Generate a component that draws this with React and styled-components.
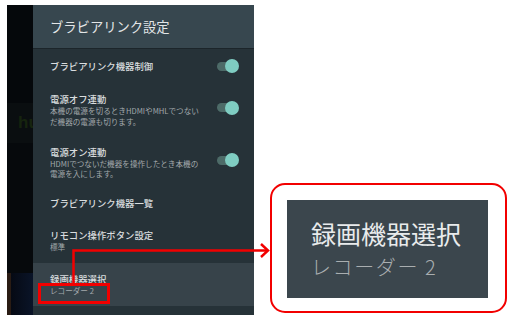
import React from 'react';
import styled, { createGlobalStyle } from 'styled-components';

const Global = createGlobalStyle`
  html, body { margin: 0; padding: 0; background: #fff; }
  body { font-family: "Noto Sans CJK JP", "Noto Sans", sans-serif; }
`;

const Page = styled.div`
  position: relative;
  width: 517px;
  height: 331px;
  display: flex;
  align-items: flex-start;
  padding: 5px 0 0 7px;
  box-sizing: border-box;
  overflow: hidden;
`;

const Screen = styled.div`
  display: flex;
  width: 247px;
  height: 310px;
`;

const Backdrop = styled.div`
  width: 26px;
  display: flex;
  flex-direction: column;
  background: #05080b;
  overflow: hidden;
`;

const Band = styled.div`
  height: ${p => p.h}px;
  background: ${p => p.bg};
  color: #16240e;
  font-family: "Liberation Sans", sans-serif;
  font-weight: bold;
  font-size: 17px;
  line-height: ${p => p.h}px;
  padding-left: 11px;
  white-space: nowrap;
`;

const Panel = styled.div`
  width: 221px;
  display: flex;
  flex-direction: column;
  background: #263238;
`;

const Header = styled.div`
  height: 43px;
  display: flex;
  align-items: center;
  padding-left: 17px;
  background: #37474f;
  border-bottom: 1px solid #1c252a;
  color: #e3e6e7;
  font-size: 13.3px;
`;

const Row = styled.div`
  height: ${p => p.h}px;
  display: flex;
  align-items: center;
  justify-content: space-between;
  padding: 0 17px;
  background: ${p => (p.selected ? '#37434a' : 'transparent')};
  box-sizing: border-box;
`;

const Texts = styled.div`
  display: flex;
  flex-direction: column;
`;

const Title = styled.div`
  color: #d9dddf;
  font-size: 9.4px;
  font-weight: 500;
  line-height: 14px;
  white-space: nowrap;
`;

const Desc = styled.div`
  color: #a3a9ac;
  font-size: 7.6px;
  line-height: 10.5px;
  white-space: nowrap;
`;

const Toggle = styled.div`
  position: relative;
  width: 20px;
  height: 9px;
  margin-top: ${p => p.offset || 0}px;
  border-radius: 5px;
  background: #4d6b68;
  &::after {
    content: '';
    position: absolute;
    right: -2px;
    top: -2.5px;
    width: 14px;
    height: 14px;
    border-radius: 50%;
    background: #7fcdc2;
  }
`;

const Footer = styled.div`
  flex: 1;
  background: #263238;
`;

const Callout = styled.div`
  margin: 178px 0 0 16px;
  width: 237px;
  height: 130px;
  box-sizing: border-box;
  border: 2.5px solid #f20000;
  border-radius: 15px;
  padding: 15px 17px 13px 15px;
  display: flex;
`;

const CalloutInner = styled.div`
  flex: 1;
  background: #3b464d;
  display: flex;
  flex-direction: column;
  justify-content: center;
  padding-left: 24px;
`;

const BigTitle = styled.div`
  color: #e9ebec;
  font-size: 25px;
  line-height: 32px;
  white-space: nowrap;
`;

const BigSub = styled.div`
  color: #a9aeb0;
  font-size: 20px;
  font-weight: 300;
  letter-spacing: 1.6px;
  line-height: 28px;
  white-space: nowrap;
  margin-top: 4px;
`;

const Overlay = styled.svg`
  position: absolute;
  left: 0;
  top: 0;
  pointer-events: none;
`;

export default function App() {
  return (
    <>
      <Global />
      <Page>
        <Screen>
          <Backdrop>
            <Band h={98} bg="#05080b" />
            <Band h={40} bg="#0a0e10">hu</Band>
            <Band h={130} bg="#06090c" />
            <Band h={42} bg="linear-gradient(90deg, #2a1c14 0 4px, #060a14 4px, #0a1428)" />
          </Backdrop>
          <Panel>
            <Header>ブラビアリンク設定</Header>
            <Row h={34}>
              <Title>ブラビアリンク機器制御</Title>
              <Toggle />
            </Row>
            <Row h={53}>
              <Texts>
                <Title>電源オフ連動</Title>
                <Desc>本機の電源を切るときHDMIやMHLでつない</Desc>
                <Desc>だ機器の電源も切ります。</Desc>
              </Texts>
              <Toggle offset={-4} />
            </Row>
            <Row h={52}>
              <Texts>
                <Title>電源オン連動</Title>
                <Desc>HDMIでつないだ機器を操作したとき本機の</Desc>
                <Desc>電源を入にします。</Desc>
              </Texts>
              <Toggle offset={-4} />
            </Row>
            <Row h={30}>
              <Title>ブラビアリンク機器一覧</Title>
            </Row>
            <Row h={45}>
              <Texts>
                <Title>リモコン操作ボタン設定</Title>
                <Desc>標準</Desc>
              </Texts>
            </Row>
            <Row h={43} selected>
              <Texts>
                <Title>録画機器選択</Title>
                <Desc>レコーダー 2</Desc>
              </Texts>
            </Row>
            <Footer />
          </Panel>
        </Screen>
        <Callout>
          <CalloutInner>
            <BigTitle>録画機器選択</BigTitle>
            <BigSub>レコーダー 2</BigSub>
          </CalloutInner>
        </Callout>
        <Overlay width="517" height="331" viewBox="0 0 517 331">
          <rect x="39.5" y="284.5" width="69" height="18" fill="none" stroke="#f20000" strokeWidth="3" />
          <path d="M73.5 284 V250.5 H268" fill="none" stroke="#f20000" strokeWidth="2.5" />
          <path d="M261 244 L268 250.5 L261 257" fill="none" stroke="#f20000" strokeWidth="2.5" />
        </Overlay>
      </Page>
    </>
  );
}
